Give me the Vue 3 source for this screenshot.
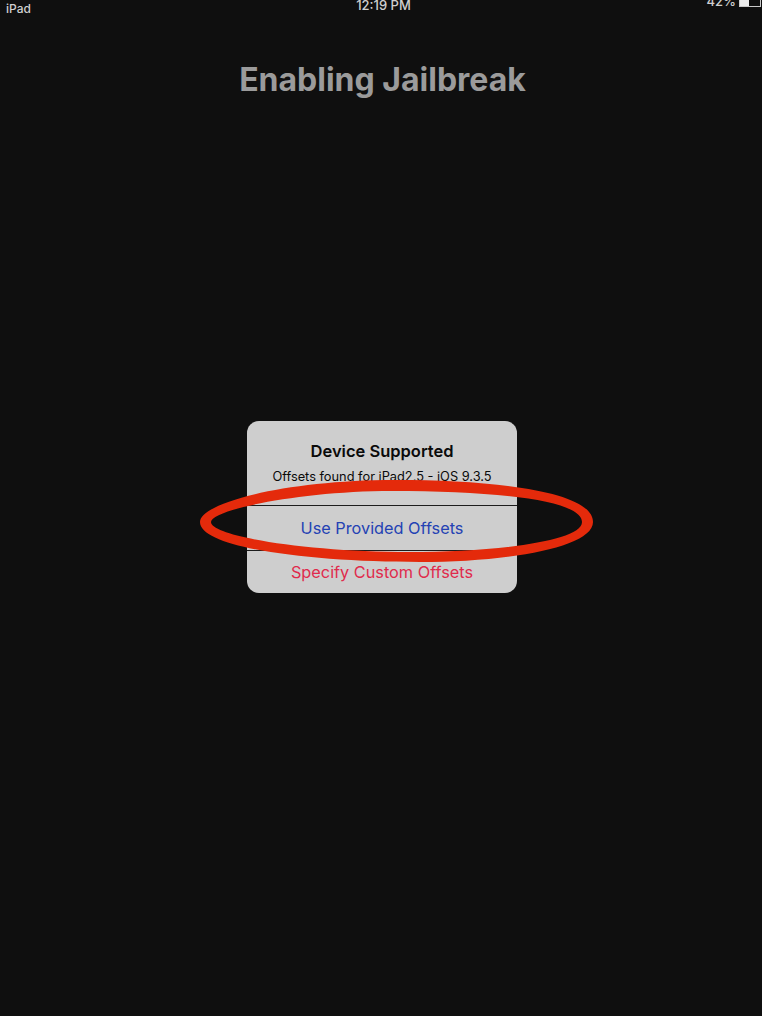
<script setup>
const actions = [
  { label: 'Use Provided Offsets', tone: 'primary' },
  { label: 'Specify Custom Offsets', tone: 'danger' },
]
</script>

<template>
  <main class="screen">
    <header class="status">
      <span class="device">iPad</span>
      <span class="time">12:19 PM</span>
      <span class="battery">
        <span>42%</span>
        <span class="cell"><span class="charge"></span></span>
      </span>
    </header>

    <h1 class="title">Enabling Jailbreak</h1>

    <section class="stage">
      <div class="dialog">
        <div class="copy">
          <h2>Device Supported</h2>
          <p>Offsets found for iPad2,5 - iOS 9.3.5</p>
        </div>
        <div v-for="a in actions" :key="a.label" class="action" :class="a.tone">{{ a.label }}</div>
      </div>
    </section>

    <svg class="ring" viewBox="197 476 400 90" aria-hidden="true">
      <path fill="#e42a0b" fill-rule="evenodd"
        d="M200 522C200 503 285 480 395 480C500 480 593 492 593 522C593 548 505 562 420 562C310 562 200 548 200 522Z
           M211 522C211 510 300 491 392 491C495 491 582 500 582 522C582 542 490 552 410 552C305 552 211 536 211 522Z" />
    </svg>
  </main>
</template>

<style>
html, body { margin: 0; background: #0f0f0f; }
</style>

<style scoped>
.screen {
  position: relative;
  width: 762px;
  height: 1016px;
  overflow: hidden;
  background: #0f0f0f;
  font-family: Inter, "Liberation Sans", sans-serif;
  display: flex;
  flex-direction: column;
}
.status {
  display: grid;
  grid-template-columns: 1fr auto 1fr;
  align-items: center;
  height: 12px;
  margin-top: -1px;
  padding: 0 1px 0 6px;
  color: #cfcfcf;
  font-size: 12px;
  line-height: 12px;
  font-weight: 500;
}
.time { font-size: 13px; }
.device { transform: translateY(4px); }
.battery {
  justify-self: end;
  display: flex;
  align-items: flex-end;
  gap: 3px;
  font-size: 13px;
  transform: translateY(-4px);
}
.cell {
  width: 22px;
  height: 10px;
  border: 1px solid #c9c9c9;
  box-sizing: border-box;
  display: block;
  background: #0f0f0f;
}
.charge { display: block; width: 9px; height: 100%; background: #eeeeee; }
.title {
  margin: 50px 0 0;
  padding-left: 3px;
  text-align: center;
  color: #9b9b9b;
  font-size: 32px;
  line-height: 38px;
  font-weight: 700;
}
.stage {
  margin-top: 322px;
  padding-left: 2px;
  display: flex;
  justify-content: center;
}
.dialog {
  width: 270px;
  height: 172px;
  border-radius: 12px;
  background: #cecece;
  color: #0a0a0a;
  text-align: center;
  display: grid;
  grid-template-rows: 84px 45px 43px;
}
.copy { padding-top: 20px; box-sizing: border-box; }
.copy h2 { margin: 0; font-size: 16.5px; line-height: 20px; font-weight: 600; }
.copy p { margin: 8px 0 0; font-size: 12.8px; line-height: 16px; }
.action {
  border-top: 1px solid #1c1c1c;
  font-size: 16.3px;
  line-height: 44px;
}
.primary { color: #2442b4; }
.danger { color: #e02a4c; line-height: 42px; }
.ring {
  position: absolute;
  left: 197px;
  top: 476px;
  width: 400px;
  height: 90px;
}
</style>
